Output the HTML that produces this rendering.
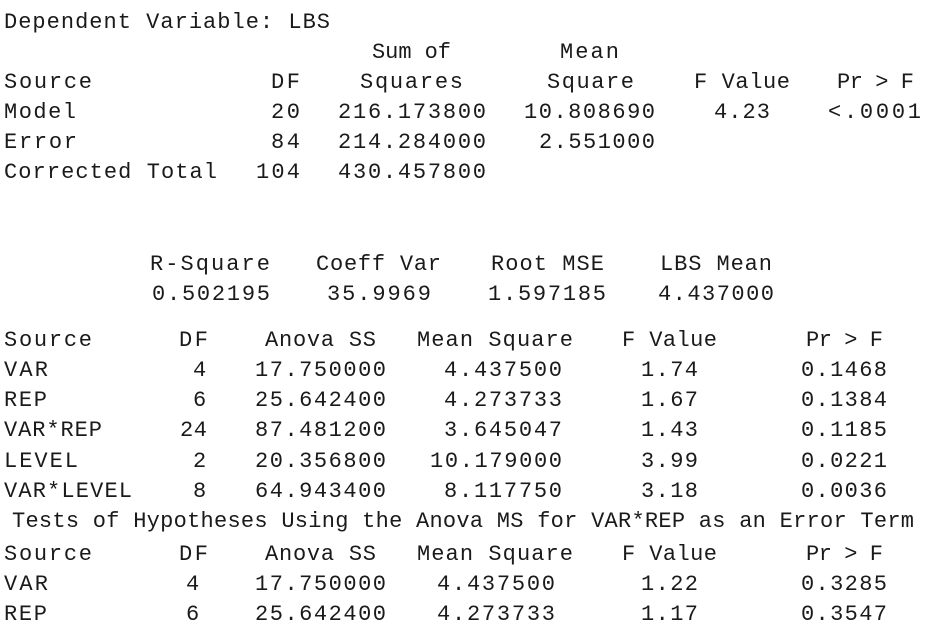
<!DOCTYPE html>
<html><head><meta charset="utf-8"><style>
html,body{margin:0;padding:0;background:#fff;}
svg{display:block}
text{font-family:"Liberation Mono","Courier New",monospace;font-size:22px;fill:#1a1a1a;}
</style></head><body>
<svg width="935" height="643" viewBox="0 0 935 643" xmlns="http://www.w3.org/2000/svg">
<g>
<text x="4" y="28" textLength="326" lengthAdjust="spacing">Dependent Variable: LBS</text>

<text x="372" y="58" textLength="79" lengthAdjust="spacing">Sum of</text>
<text x="560" y="58" textLength="59" lengthAdjust="spacing">Mean</text>

<text x="4" y="88" textLength="88" lengthAdjust="spacing">Source</text>
<text x="271" y="88" textLength="29" lengthAdjust="spacing">DF</text>
<text x="360" y="88" textLength="103" lengthAdjust="spacing">Squares</text>
<text x="547" y="88" textLength="87" lengthAdjust="spacing">Square</text>
<text x="694" y="88" textLength="96" lengthAdjust="spacing">F Value</text>
<text x="837" y="88" textLength="77" lengthAdjust="spacing">Pr &gt; F</text>

<text x="4" y="118" textLength="72" lengthAdjust="spacing">Model</text>
<text x="271" y="118" textLength="29" lengthAdjust="spacing">20</text>
<text x="338" y="118" textLength="148" lengthAdjust="spacing">216.173800</text>
<text x="524" y="118" textLength="131" lengthAdjust="spacing">10.808690</text>
<text x="714" y="118" textLength="56" lengthAdjust="spacing">4.23</text>
<text x="828" y="118" textLength="93" lengthAdjust="spacing">&lt;.0001</text>

<text x="4" y="148" textLength="73" lengthAdjust="spacing">Error</text>
<text x="271" y="148" textLength="29" lengthAdjust="spacing">84</text>
<text x="338" y="148" textLength="148" lengthAdjust="spacing">214.284000</text>
<text x="539" y="148" textLength="116" lengthAdjust="spacing">2.551000</text>

<text x="4" y="178" textLength="213" lengthAdjust="spacing">Corrected Total</text>
<text x="256" y="178" textLength="44" lengthAdjust="spacing">104</text>
<text x="338" y="178" textLength="148" lengthAdjust="spacing">430.457800</text>

<text x="150" y="270" textLength="120" lengthAdjust="spacing">R-Square</text>
<text x="316" y="270" textLength="125" lengthAdjust="spacing">Coeff Var</text>
<text x="491" y="270" textLength="113" lengthAdjust="spacing">Root MSE</text>
<text x="660" y="270" textLength="112" lengthAdjust="spacing">LBS Mean</text>
<text x="152" y="300" textLength="118" lengthAdjust="spacing">0.502195</text>
<text x="327" y="300" textLength="104" lengthAdjust="spacing">35.9969</text>
<text x="488" y="300" textLength="118" lengthAdjust="spacing">1.597185</text>
<text x="658" y="300" textLength="116" lengthAdjust="spacing">4.437000</text>

<text x="4" y="346" textLength="88" lengthAdjust="spacing">Source</text>
<text x="179" y="346" textLength="29" lengthAdjust="spacing">DF</text>
<text x="265" y="346" textLength="111" lengthAdjust="spacing">Anova SS</text>
<text x="417" y="346" textLength="156" lengthAdjust="spacing">Mean Square</text>
<text x="622" y="346" textLength="95" lengthAdjust="spacing">F Value</text>
<text x="806" y="346" textLength="77" lengthAdjust="spacing">Pr &gt; F</text>

<text x="4" y="376" textLength="44" lengthAdjust="spacing">VAR</text>
<text x="193" y="376" textLength="14" lengthAdjust="spacing">4</text>
<text x="255" y="376" textLength="131" lengthAdjust="spacing">17.750000</text>
<text x="444" y="376" textLength="118" lengthAdjust="spacing">4.437500</text>
<text x="641" y="376" textLength="57" lengthAdjust="spacing">1.74</text>
<text x="801" y="376" textLength="86" lengthAdjust="spacing">0.1468</text>

<text x="4" y="406" textLength="43" lengthAdjust="spacing">REP</text>
<text x="193" y="406" textLength="14" lengthAdjust="spacing">6</text>
<text x="255" y="406" textLength="131" lengthAdjust="spacing">25.642400</text>
<text x="444" y="406" textLength="118" lengthAdjust="spacing">4.273733</text>
<text x="641" y="406" textLength="57" lengthAdjust="spacing">1.67</text>
<text x="801" y="406" textLength="86" lengthAdjust="spacing">0.1384</text>

<text x="4" y="436" textLength="98" lengthAdjust="spacing">VAR*REP</text>
<text x="180" y="436" textLength="27" lengthAdjust="spacing">24</text>
<text x="255" y="436" textLength="131" lengthAdjust="spacing">87.481200</text>
<text x="444" y="436" textLength="118" lengthAdjust="spacing">3.645047</text>
<text x="641" y="436" textLength="57" lengthAdjust="spacing">1.43</text>
<text x="801" y="436" textLength="86" lengthAdjust="spacing">0.1185</text>

<text x="4" y="467" textLength="74" lengthAdjust="spacing">LEVEL</text>
<text x="193" y="467" textLength="14" lengthAdjust="spacing">2</text>
<text x="255" y="467" textLength="131" lengthAdjust="spacing">20.356800</text>
<text x="430" y="467" textLength="132" lengthAdjust="spacing">10.179000</text>
<text x="641" y="467" textLength="57" lengthAdjust="spacing">3.99</text>
<text x="801" y="467" textLength="86" lengthAdjust="spacing">0.0221</text>

<text x="4" y="497" textLength="128" lengthAdjust="spacing">VAR*LEVEL</text>
<text x="193" y="497" textLength="14" lengthAdjust="spacing">8</text>
<text x="255" y="497" textLength="131" lengthAdjust="spacing">64.943400</text>
<text x="444" y="497" textLength="118" lengthAdjust="spacing">8.117750</text>
<text x="641" y="497" textLength="57" lengthAdjust="spacing">3.18</text>
<text x="801" y="497" textLength="86" lengthAdjust="spacing">0.0036</text>

<text x="12" y="527" textLength="902" lengthAdjust="spacing">Tests of Hypotheses Using the Anova MS for VAR*REP as an Error Term</text>

<text x="4" y="560" textLength="88" lengthAdjust="spacing">Source</text>
<text x="179" y="560" textLength="29" lengthAdjust="spacing">DF</text>
<text x="265" y="560" textLength="111" lengthAdjust="spacing">Anova SS</text>
<text x="417" y="560" textLength="156" lengthAdjust="spacing">Mean Square</text>
<text x="622" y="560" textLength="95" lengthAdjust="spacing">F Value</text>
<text x="806" y="560" textLength="77" lengthAdjust="spacing">Pr &gt; F</text>

<text x="4" y="590" textLength="44" lengthAdjust="spacing">VAR</text>
<text x="186" y="590" textLength="14" lengthAdjust="spacing">4</text>
<text x="255" y="590" textLength="131" lengthAdjust="spacing">17.750000</text>
<text x="437" y="590" textLength="118" lengthAdjust="spacing">4.437500</text>
<text x="641" y="590" textLength="57" lengthAdjust="spacing">1.22</text>
<text x="801" y="590" textLength="86" lengthAdjust="spacing">0.3285</text>

<text x="4" y="620" textLength="43" lengthAdjust="spacing">REP</text>
<text x="186" y="620" textLength="14" lengthAdjust="spacing">6</text>
<text x="255" y="620" textLength="131" lengthAdjust="spacing">25.642400</text>
<text x="437" y="620" textLength="118" lengthAdjust="spacing">4.273733</text>
<text x="641" y="620" textLength="57" lengthAdjust="spacing">1.17</text>
<text x="801" y="620" textLength="86" lengthAdjust="spacing">0.3547</text>
</g>
</svg>
</body></html>
